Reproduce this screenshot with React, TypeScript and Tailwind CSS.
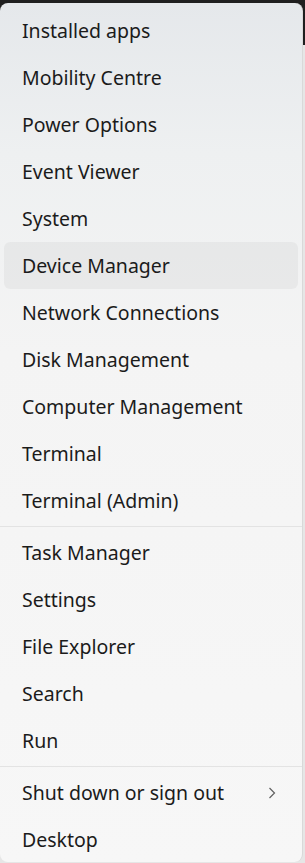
import React from "react";

const groupA = [
  "Installed apps",
  "Mobility Centre",
  "Power Options",
  "Event Viewer",
  "System",
  "Device Manager",
  "Network Connections",
  "Disk Management",
  "Computer Management",
  "Terminal",
  "Terminal (Admin)",
];
const groupB = ["Task Manager", "Settings", "File Explorer", "Search", "Run"];

function Item({ label, hover, chevron }: { label: string; hover?: boolean; chevron?: boolean }) {
  return (
    <div
      className={
        "mx-1 h-[47px] flex items-center justify-between pl-[18px] pr-[22px] pt-[1px] rounded-[6px] " +
        (hover ? "bg-[#0000000a]" : "")
      }
    >
      <span className="text-[19.5px] text-[#1b1b1b] leading-none">{label}</span>
      {chevron && (
        <svg width="8" height="12" viewBox="0 0 8 12" className="text-[#606060] -mt-[1px]">
          <path d="M1.5 1 L6.5 6 L1.5 11" fill="none" stroke="currentColor" strokeWidth="1.2" />
        </svg>
      )}
    </div>
  );
}

function Sep() {
  return <div className="my-[2px] h-px bg-[#e3e3e3]" />;
}

export default function App() {
  return (
    <div
      className="w-[305px] h-[863px] overflow-hidden pt-[3px] bg-[linear-gradient(to_bottom,#1f1f1f_45px,#e6e6e6_45px)]"
      style={{ fontFamily: '"Noto Sans", "Open Sans", sans-serif' }}
    >
      <div className="w-[303px] h-[859px] rounded-[8px] py-1 border-r border-[#d9d9d9] bg-[linear-gradient(to_bottom,#e5e8eb_0px,#eef0f1_150px,#f4f4f4_350px,#f7f7f7_863px)]">
        {groupA.map((l) => (
          <Item key={l} label={l} hover={l === "Device Manager"} />
        ))}
        <Sep />
        {groupB.map((l) => (
          <Item key={l} label={l} />
        ))}
        <Sep />
        <Item label="Shut down or sign out" chevron />
        <Item label="Desktop" />
      </div>
    </div>
  );
}
